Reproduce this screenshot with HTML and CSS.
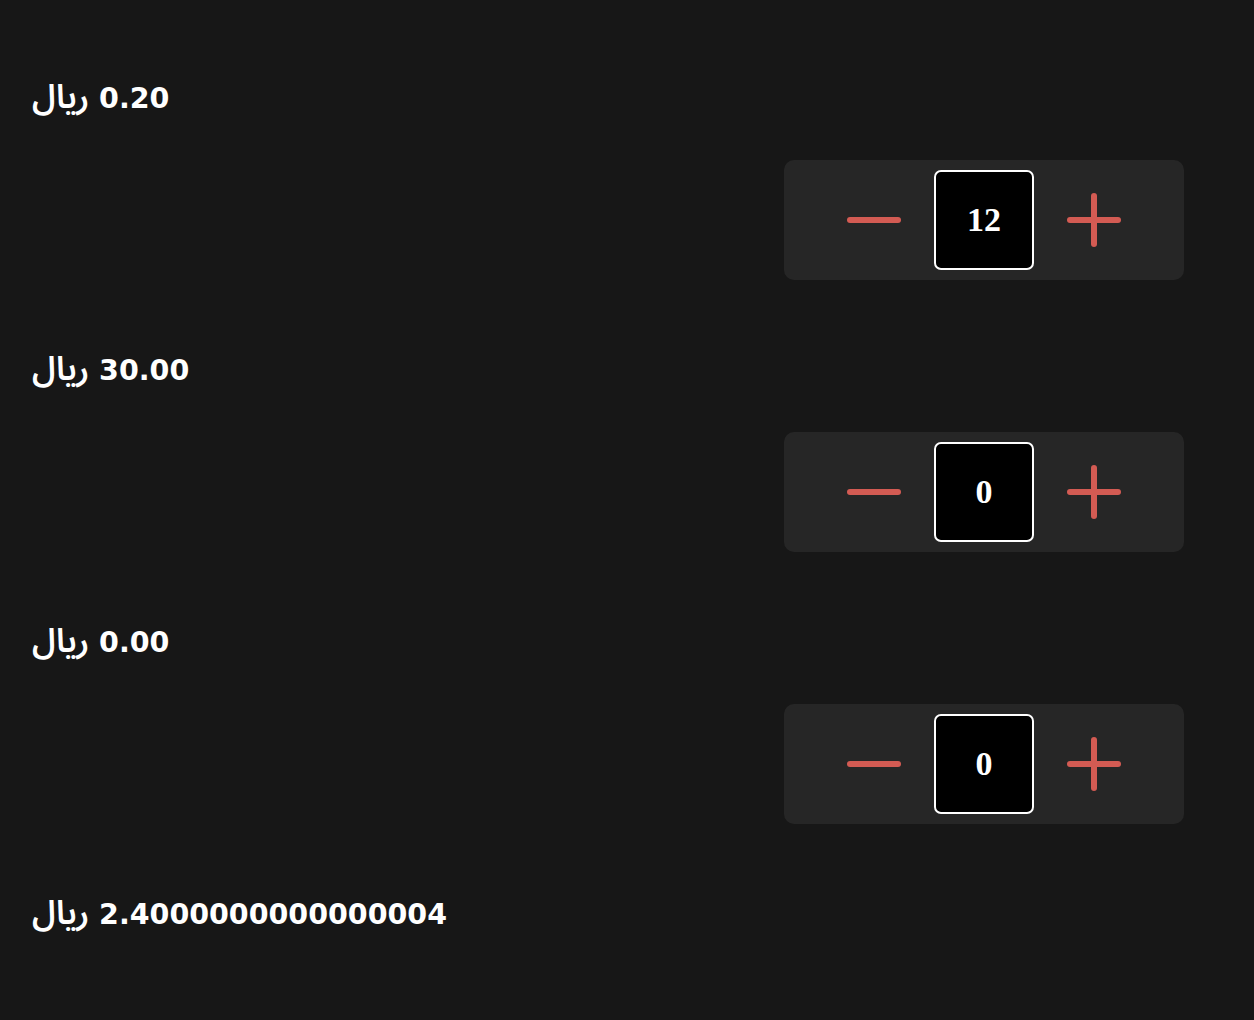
FILE: index.html
```html
<!DOCTYPE html>
<html lang="ar">
<head>
<meta charset="utf-8">
<link rel="stylesheet" href="styles.css">
</head>
<body>
<main class="list">
  <section class="item">
    <div class="price"><bdi class="cur">ريال</bdi> <bdi>0.20</bdi></div>
    <div class="counter">
      <button class="btn" aria-label="minus"><svg width="54" height="54" viewBox="0 0 54 54"><line x1="3" y1="27" x2="51" y2="27" /></svg></button>
      <div class="qty">12</div>
      <button class="btn" aria-label="plus"><svg width="54" height="54" viewBox="0 0 54 54"><line x1="3" y1="27" x2="51" y2="27" /><line x1="27" y1="3" x2="27" y2="51" /></svg></button>
    </div>
  </section>
  <section class="item">
    <div class="price"><bdi class="cur">ريال</bdi> <bdi>30.00</bdi></div>
    <div class="counter">
      <button class="btn" aria-label="minus"><svg width="54" height="54" viewBox="0 0 54 54"><line x1="3" y1="27" x2="51" y2="27" /></svg></button>
      <div class="qty">0</div>
      <button class="btn" aria-label="plus"><svg width="54" height="54" viewBox="0 0 54 54"><line x1="3" y1="27" x2="51" y2="27" /><line x1="27" y1="3" x2="27" y2="51" /></svg></button>
    </div>
  </section>
  <section class="item">
    <div class="price"><bdi class="cur">ريال</bdi> <bdi>0.00</bdi></div>
    <div class="counter">
      <button class="btn" aria-label="minus"><svg width="54" height="54" viewBox="0 0 54 54"><line x1="3" y1="27" x2="51" y2="27" /></svg></button>
      <div class="qty">0</div>
      <button class="btn" aria-label="plus"><svg width="54" height="54" viewBox="0 0 54 54"><line x1="3" y1="27" x2="51" y2="27" /><line x1="27" y1="3" x2="27" y2="51" /></svg></button>
    </div>
  </section>
  <section class="item">
    <div class="price"><bdi class="cur">ريال</bdi> <bdi>2.4000000000000004</bdi></div>
  </section>
</main>
</body>
</html>
```
FILE: styles.css
```css
html, body {
  margin: 0;
  padding: 0;
  background: #171717;
  color: #ffffff;
}
body {
  font-family: "DejaVu Sans", sans-serif;
}
.list {
  padding: 78px 70px 0 32px;
  display: flex;
  flex-direction: column;
}
.item {
  display: flex;
  flex-direction: column;
  padding-bottom: 70px;
}
.price {
  height: 40px;
  line-height: 40px;
  font-size: 28.5px;
  font-weight: 700;
  text-align: left;
  white-space: nowrap;
  direction: ltr;
}
.cur {
  font-family: "Noto Sans Arabic", "Noto Naskh Arabic", "DejaVu Sans", sans-serif;
  font-size: 33px;
  font-weight: 600;
}
.counter {
  margin-top: 42px;
  align-self: flex-end;
  width: 400px;
  height: 120px;
  box-sizing: border-box;
  background: #262626;
  border-radius: 10px;
  display: flex;
  align-items: center;
  justify-content: center;
  gap: 33px;
}
.btn {
  width: 54px;
  height: 54px;
  padding: 0;
  border: 0;
  background: none;
  display: flex;
}
.btn svg line {
  stroke: #d35b53;
  stroke-width: 6;
  stroke-linecap: round;
}
.qty {
  width: 100px;
  height: 100px;
  box-sizing: border-box;
  background: #000;
  border: 2px solid #fff;
  border-radius: 7px;
  display: flex;
  align-items: center;
  justify-content: center;
  font-family: "Liberation Serif", serif;
  font-weight: 700;
  font-size: 34px;
  color: #fff;
}
```
